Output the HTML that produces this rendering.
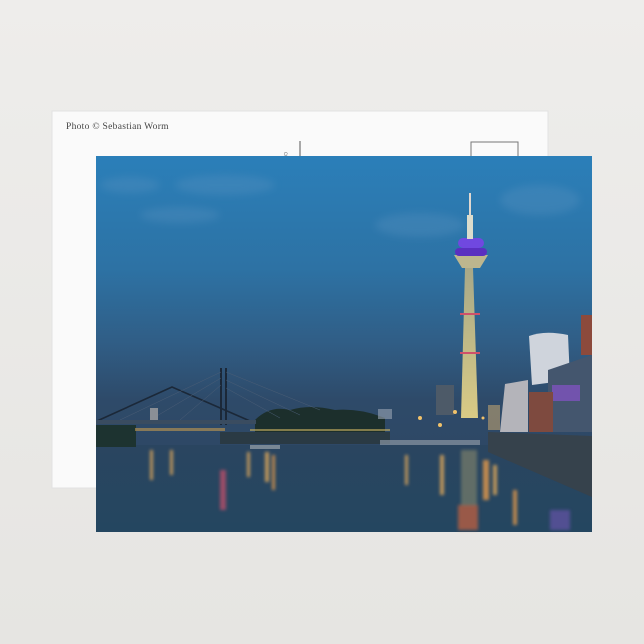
<!DOCTYPE html>
<html><head><style>
html,body{margin:0;padding:0;width:644px;height:644px;overflow:hidden;background:#ecebe8;}
</style></head><body>
<svg width="644" height="644" viewBox="0 0 644 644" xmlns="http://www.w3.org/2000/svg" style="position:absolute;left:0;top:0">
<defs>
<linearGradient id="bg" x1="0" y1="0" x2="0" y2="1"><stop offset="0" stop-color="#eeedeb"/><stop offset="1" stop-color="#e6e5e2"/></linearGradient>
<linearGradient id="sky" x1="0" y1="0" x2="0" y2="1">
<stop offset="0" stop-color="#2b7fb9"/><stop offset="0.3" stop-color="#2d72a4"/><stop offset="0.5" stop-color="#305d85"/><stop offset="0.65" stop-color="#2e4a69"/><stop offset="1" stop-color="#2f4560"/></linearGradient>
<linearGradient id="water" x1="0" y1="0" x2="0" y2="1">
<stop offset="0" stop-color="#2a4560"/><stop offset="1" stop-color="#244660"/></linearGradient>
<linearGradient id="tw" x1="0" y1="0" x2="0" y2="1"><stop offset="0" stop-color="#a8a888"/><stop offset="1" stop-color="#d9cb85"/></linearGradient>
<filter id="blur"><feGaussianBlur stdDeviation="1.5"/></filter>
<filter id="blur3"><feGaussianBlur stdDeviation="4"/></filter>
</defs>
<rect width="644" height="644" fill="url(#bg)"/>
<rect x="52" y="111" width="496" height="377" fill="#fafafa" stroke="#e2e2e2"/>
<text x="66" y="129" font-family="Liberation Serif, serif" font-size="9.5" fill="#444" letter-spacing="0.3">Photo © Sebastian Worm</text>
<line x1="300" y1="141" x2="300" y2="156" stroke="#555" stroke-width="1"/>
<text x="296" y="156" font-family="Liberation Sans, sans-serif" font-size="6" fill="#777" transform="rotate(90 292 148)">com</text>
<rect x="471" y="142" width="47" height="20" fill="none" stroke="#777" stroke-width="1"/>
<g>
<rect x="96" y="156" width="496" height="376" fill="url(#sky)"/>
<g fill="#5e95c2" opacity="0.3" filter="url(#blur3)">
<ellipse cx="225" cy="185" rx="50" ry="10"/><ellipse cx="180" cy="215" rx="40" ry="8"/><ellipse cx="420" cy="225" rx="45" ry="12"/><ellipse cx="540" cy="200" rx="40" ry="15"/><ellipse cx="130" cy="185" rx="30" ry="8"/>
</g>
<rect x="96" y="445" width="496" height="87" fill="url(#water)"/>
<path d="M255 420 Q270 405 290 410 Q310 404 335 410 Q360 408 385 418 L385 432 L255 432Z" fill="#1c2f2c"/>
<rect x="96" y="425" width="40" height="22" fill="#1d3330"/>
<g stroke="#1b2838" fill="none" stroke-width="1.6">
<path d="M97 421 L172 387 L250 421"/>
<line x1="221" y1="368" x2="221" y2="425" stroke-width="2"/><line x1="226" y1="368" x2="226" y2="425" stroke-width="2"/>
</g>
<g stroke="#4b5e76" stroke-width="0.5" fill="none">
<path d="M221 372 L120 420 M221 378 L150 420 M221 385 L180 420 M226 372 L320 410 M226 380 L300 415 M226 388 L280 418"/>
</g>
<rect x="96" y="420" width="160" height="4" fill="#3a4c60"/>
<rect x="135" y="428" width="90" height="3" fill="#c59a4f" opacity="0.6"/>
<rect x="150" y="408" width="8" height="12" fill="#8a8f96"/>
<rect x="378" y="409" width="14" height="10" fill="#9aa5b4" opacity="0.6"/>
<rect x="436" y="385" width="18" height="30" fill="#4d5a68"/>
<rect x="220" y="432" width="170" height="12" fill="#2a3a44"/>
<rect x="250" y="429" width="140" height="2" fill="#c8b060" opacity="0.6"/>
<path d="M465 268 L473 268 L478 418 L461 418Z" fill="url(#tw)"/>
<path d="M454 255 L488 255 L480 268 L462 268Z" fill="#bdb68e"/>
<rect x="455" y="248" width="32" height="8" rx="4" fill="#5a2fc0"/>
<rect x="458" y="238" width="26" height="10" rx="5" fill="#7048e0"/>
<rect x="467" y="215" width="6" height="24" fill="#dcdccc"/>
<rect x="469" y="193" width="2" height="22" fill="#e0d8d0"/>
<rect x="460" y="313" width="20" height="2" fill="#d0506a"/><rect x="460" y="352" width="20" height="2" fill="#d0506a"/>
<path d="M529 336 Q545 330 568 335 L570 380 L532 385Z" fill="#cfd4dc"/>
<rect x="581" y="315" width="11" height="40" fill="#8c4a3c"/>
<path d="M548 370 L592 355 L592 432 L548 432Z" fill="#44566e"/>
<rect x="552" y="385" width="28" height="16" fill="#7a52b8" opacity="0.85"/>
<path d="M505 384 L528 380 L528 432 L500 432Z" fill="#b4b4ba"/>
<rect x="529" y="392" width="24" height="40" fill="#7e4a3f"/>
<rect x="488" y="405" width="12" height="25" fill="#a8946f" opacity="0.7"/>
<g fill="#f1c26a"><circle cx="420" cy="418" r="2"/><circle cx="440" cy="425" r="2"/><circle cx="455" cy="412" r="2"/><circle cx="483" cy="418" r="1.5"/></g>
<path d="M488 432 L592 436 L592 497 L488 452Z" fill="#36424c"/>
<rect x="380" y="440" width="100" height="5" fill="#8a96a2" opacity="0.7"/>
<rect x="250" y="445" width="30" height="4" fill="#9aa4ac" opacity="0.7"/>
<g filter="url(#blur)" opacity="0.75">
<rect x="150" y="450" width="3" height="30" fill="#f2b25a"/><rect x="170" y="450" width="3" height="25" fill="#f2b25a"/>
<rect x="247" y="452" width="3" height="25" fill="#f2b25a"/><rect x="265" y="452" width="4" height="30" fill="#f2b25a"/>
<rect x="272" y="455" width="3" height="35" fill="#f2a04a"/><rect x="220" y="470" width="6" height="40" fill="#c0506a"/>
<rect x="405" y="455" width="3" height="30" fill="#f2b25a"/><rect x="440" y="455" width="4" height="40" fill="#f2b25a"/>
<rect x="461" y="450" width="16" height="60" fill="#a89e70" opacity="0.6"/><rect x="458" y="505" width="20" height="25" fill="#c06040"/>
<rect x="483" y="460" width="6" height="40" fill="#f2a04a"/><rect x="493" y="465" width="4" height="30" fill="#f2b25a"/>
<rect x="513" y="490" width="4" height="35" fill="#f2a04a"/><rect x="550" y="510" width="20" height="20" fill="#8a5cd0" opacity="0.6"/>
</g>
</g>
</svg>
</body></html>
